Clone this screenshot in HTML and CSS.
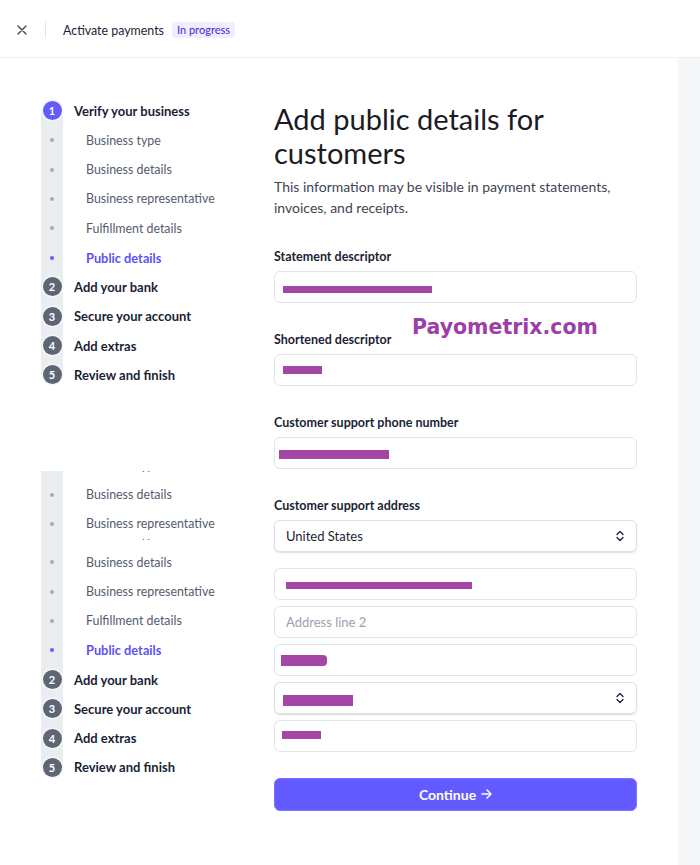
FILE: index.html
```html
<!DOCTYPE html>
<html lang="en">
<head>
<meta charset="utf-8">
<title>Activate payments</title>
<link rel="stylesheet" href="styles.css">
</head>
<body>
<header class="topbar">
  <span class="close" aria-label="Close">
    <svg width="10" height="10" viewBox="0 0 10 10"><path d="M1 1L9 9M9 1L1 9" stroke="#414552" stroke-width="1.4" stroke-linecap="round" fill="none"/></svg>
  </span>
  <span class="divider"></span>
  <span class="top-title">Activate payments</span>
  <span class="badge">In progress</span>
</header>

<div class="page">
  <div class="content">
    <aside class="sidebar">
      <ol class="steps">
        <li class="row first"><span class="mk"><span class="num active">1</span></span><span class="step-label">Verify your business</span></li>
        <li class="row"><span class="mk"><span class="dot"></span></span><span class="sub-label">Business type</span></li>
        <li class="row"><span class="mk"><span class="dot"></span></span><span class="sub-label">Business details</span></li>
        <li class="row"><span class="mk"><span class="dot"></span></span><span class="sub-label">Business representative</span></li>
        <li class="row"><span class="mk"><span class="dot"></span></span><span class="sub-label">Fulfillment details</span></li>
        <li class="row"><span class="mk"><span class="dot on"></span></span><span class="sub-label on">Public details</span></li>
        <li class="row"><span class="mk"><span class="num">2</span></span><span class="step-label">Add your bank</span></li>
        <li class="row"><span class="mk"><span class="num">3</span></span><span class="step-label">Secure your account</span></li>
        <li class="row"><span class="mk"><span class="num">4</span></span><span class="step-label">Add extras</span></li>
        <li class="row last"><span class="mk"><span class="num">5</span></span><span class="step-label">Review and finish</span></li>
      </ol>

      <ol class="steps steps-cut">
        <li class="sliver"><div class="row"><span class="mk"><span class="dot"></span></span><span class="sub-label">Business type</span></div></li>
        <li class="row"><span class="mk"><span class="dot"></span></span><span class="sub-label">Business details</span></li>
        <li class="row"><span class="mk"><span class="dot"></span></span><span class="sub-label">Business representative</span></li>
        <li class="sliver"><div class="row"><span class="mk"><span class="dot"></span></span><span class="sub-label">Business type</span></div></li>
        <li class="row"><span class="mk"><span class="dot"></span></span><span class="sub-label">Business details</span></li>
        <li class="row"><span class="mk"><span class="dot"></span></span><span class="sub-label">Business representative</span></li>
        <li class="row"><span class="mk"><span class="dot"></span></span><span class="sub-label">Fulfillment details</span></li>
        <li class="row"><span class="mk"><span class="dot on"></span></span><span class="sub-label on">Public details</span></li>
        <li class="row"><span class="mk"><span class="num">2</span></span><span class="step-label">Add your bank</span></li>
        <li class="row"><span class="mk"><span class="num">3</span></span><span class="step-label">Secure your account</span></li>
        <li class="row"><span class="mk"><span class="num">4</span></span><span class="step-label">Add extras</span></li>
        <li class="row last"><span class="mk"><span class="num">5</span></span><span class="step-label">Review and finish</span></li>
      </ol>
    </aside>

    <main class="main">
      <h1 class="heading">Add public details for customers</h1>
      <p class="lead">This information may be visible in payment statements, invoices, and receipts.</p>

      <div class="group">
        <div class="field-label">Statement descriptor</div>
        <div class="input"><span class="redact r-stmt"></span></div>
      </div>

      <div class="group">
        <div class="field-label">Shortened descriptor</div>
        <div class="input"><span class="redact r-short"></span></div>
      </div>

      <div class="group">
        <div class="field-label">Customer support phone number</div>
        <div class="input"><span class="redact r-phone"></span></div>
      </div>

      <div class="group">
        <div class="field-label">Customer support address</div>
        <div class="input select country">
          <span class="value">United States</span>
          <svg class="chev" width="8" height="12" viewBox="0 0 8 12"><path d="M1 4.5L4 1.5L7 4.5M1 7.5L4 10.5L7 7.5" stroke="#1a1f36" stroke-width="1.3" fill="none" stroke-linecap="round" stroke-linejoin="round"/></svg>
        </div>
        <div class="address">
          <div class="input"><span class="redact r-line1"></span></div>
          <div class="input"><span class="placeholder">Address line 2</span></div>
          <div class="input"><span class="redact r-city"></span></div>
          <div class="input select">
            <span class="redact r-state"></span>
            <svg class="chev" width="8" height="12" viewBox="0 0 8 12"><path d="M1 4.5L4 1.5L7 4.5M1 7.5L4 10.5L7 7.5" stroke="#1a1f36" stroke-width="1.3" fill="none" stroke-linecap="round" stroke-linejoin="round"/></svg>
          </div>
          <div class="input"><span class="redact r-zip"></span></div>
        </div>
      </div>

      <button class="continue" type="button">Continue
        <svg width="11" height="10" viewBox="0 0 11 10"><path d="M1 5H10M6 1L10 5L6 9" stroke="#fff" stroke-width="1.5" fill="none" stroke-linecap="round" stroke-linejoin="round"/></svg>
      </button>
    </main>

    <div class="watermark">Payometrix.com</div>
  </div>
  <div class="strip"></div>
</div>
</body>
</html>
```

FILE: styles.css
```css
* { box-sizing: border-box; }
html, body { margin: 0; padding: 0; background: #fff; }
body {
  font-family: Lato, "Noto Sans", sans-serif;
  color: #1a1f36;
  width: 700px;
  height: 865px;
  overflow: hidden;
}

/* top bar */
.topbar {
  height: 58px;
  border-bottom: 1px solid #edeff2;
  display: flex;
  align-items: center;
  padding: 3px 0 0 17px;
}
.close { display: flex; width: 10px; height: 10px; }
.divider { width: 1px; height: 16px; background: #e3e6ea; margin-left: 18px; }
.top-title { margin-left: 17px; font-size: 12.4px; color: #1a1f36; }
.badge {
  margin-left: 8px;
  background: #f1edff;
  color: #5433e0;
  font-size: 11px;
  line-height: 16px;
  padding: 0 5px;
  border-radius: 4px;
  font-weight: 500;
}

/* page */
.page { display: flex; height: 807px; }
.content {
  position: relative;
  width: 678px;
  display: grid;
  grid-template-columns: 274px 363px;
  align-items: start;
}
.strip { width: 22px; background: #f6f7f9; }

/* sidebar */
.sidebar { padding: 38.3px 0 0 41px; }
.steps { list-style: none; margin: 0; padding: 0; }
.steps-cut { margin-top: 81.3px; }
.row {
  display: flex;
  align-items: center;
  height: 29.33px;
}
.mk {
  width: 22px;
  height: 100%;
  background: #ebeef1;
  display: flex;
  align-items: center;
  justify-content: center;
  flex: none;
}
.first .mk { background: linear-gradient(to bottom, transparent 50%, #ebeef1 50%); }
.last .mk { background: linear-gradient(to bottom, #ebeef1 50%, transparent 50%); }
.num {
  width: 19px;
  height: 19px;
  border-radius: 50%;
  background: #5e6675;
  color: #fff;
  font-size: 11px;
  font-weight: 700;
  display: flex;
  align-items: center;
  justify-content: center;
  box-shadow: 0 0 0 1.5px #f4f5f7;
}
.num.active { background: #635bff; }
.dot { width: 4px; height: 4px; border-radius: 50%; background: #a3acb9; }
.dot.on { background: #635bff; }
.step-label { margin-left: 11px; font-size: 13px; font-weight: 700; color: #1a1f36; }
.sub-label { margin-left: 23px; font-size: 12.4px; color: #545c6e; }
.sub-label.on { color: #5b52f5; font-weight: 700; font-size: 12.8px; }

.sliver {
  height: 9px;
  overflow: hidden;
}
.sliver .row { margin-top: -20px; height: 29.33px; }
.sliver .dot { visibility: hidden; }

/* main */
.main { padding-top: 44px; }
.heading {
  margin: 0;
  font-size: 29px;
  line-height: 34px;
  font-weight: 400;
  color: #1a1b25;
}
.lead {
  margin: 6px 0 0;
  font-size: 14px;
  line-height: 21px;
  color: #414552;
}
.group { margin-top: 29px; }
.lead + .group { margin-top: 31px; }
.field-label {
  font-size: 12.5px;
  line-height: 16px;
  font-weight: 700;
  color: #1a1f36;
  margin-bottom: 6px;
}
.input {
  position: relative;
  height: 32px;
  border: 1px solid #e1e4e8;
  border-radius: 6px;
  display: flex;
  align-items: center;
  padding: 0 11px;
  font-size: 13px;
  color: #1a1f36;
}
.select {
  border-color: #dcdfe4;
  box-shadow: 0 1px 1.5px rgba(0, 0, 0, 0.14);
}
.chev { margin-left: auto; margin-right: 1px; }
.country { margin-bottom: 16px; }
.address { display: flex; flex-direction: column; gap: 6px; }
.placeholder { color: #9aa2b1; }

.redact { position: absolute; background: #a346a6; }
.r-stmt  { left: 8px;  top: 14px; width: 149px; height: 7px; }
.r-short { left: 8px;  top: 11px; width: 39px;  height: 8px; }
.r-phone { left: 4px;  top: 12px; width: 110px; height: 9px; }
.r-line1 { left: 11px; top: 13px; width: 186px; height: 7px; }
.r-city  { left: 6px;  top: 10px; width: 46px;  height: 11px; border-radius: 0 4px 4px 0; }
.r-state { left: 8px;  top: 12px; width: 70px;  height: 11px; }
.r-zip   { left: 7px;  top: 10px; width: 39px;  height: 8px; }

.continue {
  margin-top: 25.5px;
  width: 100%;
  height: 33px;
  border: 1px solid #7b74ff;
  border-radius: 6px;
  background: #635bff;
  color: #fff;
  font-family: Lato, "Noto Sans", sans-serif;
  font-size: 14px;
  font-weight: 700;
  display: flex;
  align-items: center;
  justify-content: center;
  gap: 5px;
  padding: 0;
}

.watermark {
  position: absolute;
  left: 412px;
  top: 257px;
  font-family: "DejaVu Sans", sans-serif;
  font-weight: 700;
  font-size: 20.5px;
  line-height: 24px;
  color: #9c3fa8;
}
```
